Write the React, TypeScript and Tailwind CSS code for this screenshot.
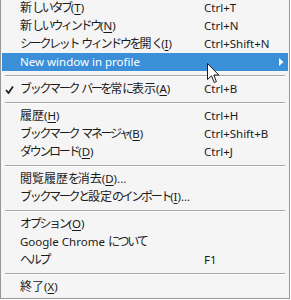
import React from 'react';

type Item =
  | { kind: 'sep' }
  | {
      kind: 'item';
      label: string;
      key?: string;
      tail?: string;
      shortcut?: string;
      checked?: boolean;
      active?: boolean;
      submenu?: boolean;
    };

const items: Item[] = [
  { kind: 'item', label: '新しいタブ', key: 'T', shortcut: 'Ctrl+T' },
  { kind: 'item', label: '新しいウィンドウ', key: 'N', shortcut: 'Ctrl+N' },
  { kind: 'item', label: 'シークレット ウィンドウを開く', key: 'I', shortcut: 'Ctrl+Shift+N' },
  { kind: 'item', label: 'New window in profile', active: true, submenu: true },
  { kind: 'sep' },
  { kind: 'item', label: 'ブックマーク バーを常に表示', key: 'A', shortcut: 'Ctrl+B', checked: true },
  { kind: 'sep' },
  { kind: 'item', label: '履歴', key: 'H', shortcut: 'Ctrl+H' },
  { kind: 'item', label: 'ブックマーク マネージャ', key: 'B', shortcut: 'Ctrl+Shift+B' },
  { kind: 'item', label: 'ダウンロード', key: 'D', shortcut: 'Ctrl+J' },
  { kind: 'sep' },
  { kind: 'item', label: '閲覧履歴を消去', key: 'D', tail: '...' },
  { kind: 'item', label: 'ブックマークと設定のインポート', key: 'I', tail: '...' },
  { kind: 'sep' },
  { kind: 'item', label: 'オプション', key: 'O' },
  { kind: 'item', label: 'Google Chrome について' },
  { kind: 'item', label: 'ヘルプ', shortcut: 'F1' },
  { kind: 'sep' },
  { kind: 'item', label: '終了', key: 'X' },
];

// 0 latin, 1 kana (squeezed like Meiryo UI), 2 kanji
const kind = (c: string) =>
  /[\u3040-\u30ff]/.test(c) ? 1 : /[\u3400-\u9fff]/.test(c) ? 2 : 0;

function Label({ text }: { text: string }) {
  const runs: { k: number; s: string }[] = [];
  for (const c of text) {
    const k = kind(c);
    const last = runs[runs.length - 1];
    if (last && last.k === k) last.s += c;
    else runs.push({ k, s: c });
  }
  return (
    <>
      {runs.map((r, i) => (
        <span
          key={i}
          className={
            r.k === 1 ? 'text-[12px] tracking-[-2.3px]' : r.k === 2 ? 'text-[12px]' : ''
          }
        >
          {r.s}
        </span>
      ))}
    </>
  );
}

function Check() {
  return (
    <svg width="9" height="8" viewBox="0 0 9 8" className="absolute left-[3px] top-[6px]">
      <path d="M1 4 L3.5 7 L8 0.5" fill="none" stroke="#222" strokeWidth="1.8" />
    </svg>
  );
}

function Cursor() {
  return (
    <svg
      width="13"
      height="21"
      viewBox="0 0 13 21"
      className="absolute left-[207px] top-[63px] pointer-events-none"
    >
      <path
        d="M0.5 0.5 L0.5 16.5 L4.5 12.8 L7.2 19.5 L9.4 18.6 L6.8 12 L11.8 12 Z"
        fill="#fff"
        stroke="#1a1a1a"
        strokeWidth="1"
      />
    </svg>
  );
}

export default function App() {
  return (
    <div
      className="relative w-[291px] h-[300px] bg-white overflow-hidden text-[11.5px]"
      style={{ fontFamily: '"Noto Sans", "Noto Sans CJK JP", sans-serif' }}
    >
      <div className="w-[290px] h-[299px] bg-[#f5f5f5] border-l border-r border-b border-[#979797] overflow-hidden">
        <div className="-mt-px px-px">
          {items.map((it, i) =>
            it.kind === 'sep' ? (
              <div key={i} className="h-[9px] flex flex-col justify-center px-[3px]">
                <div className="h-px bg-[#a8a8a8]" />
                <div className="h-px bg-white" />
              </div>
            ) : (
              <div
                key={i}
                className={`relative h-[18px] flex items-center whitespace-nowrap ${
                  it.active ? 'bg-[#3b8ed8] text-white' : 'text-[#1b1b1b]'
                }`}
              >
                {it.checked && <Check />}
                <span className="pl-[18px] w-[202px]">
                  <Label text={it.label} />
                  {it.key && (
                    <>
                      (<span className="underline underline-offset-2">{it.key}</span>)
                    </>
                  )}
                  {it.tail}
                </span>
                {it.shortcut && <span>{it.shortcut}</span>}
                {it.submenu && (
                  <svg width="5" height="8" viewBox="0 0 5 8" className="absolute left-[277px] top-[5px]">
                    <path d="M0 0 L4.5 4 L0 8 Z" fill="#fff" />
                  </svg>
                )}
              </div>
            )
          )}
        </div>
      </div>
      <Cursor />
    </div>
  );
}
